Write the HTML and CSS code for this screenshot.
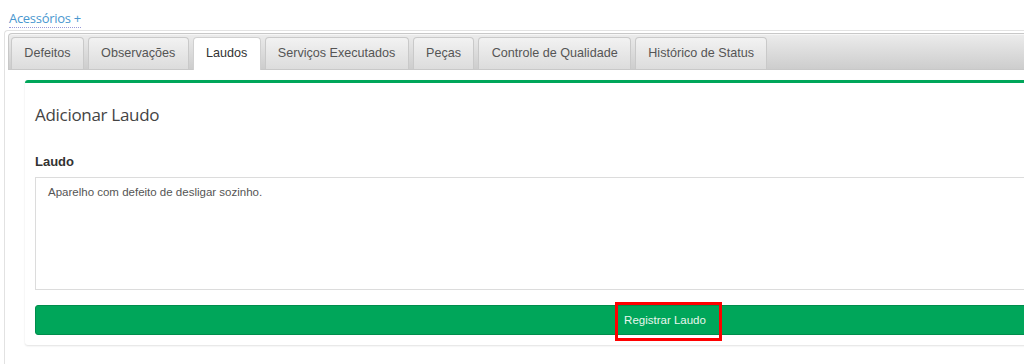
FILE: index.html
```html
<!DOCTYPE html>
<html lang="pt-BR">
<head>
<meta charset="utf-8">
<title>Laudos</title>
<link rel="stylesheet" href="styles.css">
</head>
<body>
<div class="page">
  <div class="top-link"><a href="#" class="acc">Acessórios +</a></div>
  <div class="outer">
    <ul class="tabs">
      <li class="tab">Defeitos</li>
      <li class="tab">Observações</li>
      <li class="tab active">Laudos</li>
      <li class="tab">Serviços Executados</li>
      <li class="tab">Peças</li>
      <li class="tab">Controle de Qualidade</li>
      <li class="tab">Histórico de Status</li>
    </ul>
    <div class="panel">
      <div class="box">
        <h3 class="box-title">Adicionar Laudo</h3>
        <label class="lbl">Laudo</label>
        <div class="textarea">Aparelho com defeito de desligar sozinho.</div>
        <div class="btn-wrap">
          <button class="btn">Registrar Laudo</button>
          <span class="highlight"></span>
        </div>
      </div>
    </div>
  </div>
</div>
</body>
</html>
```

FILE: styles.css
```css
html, body {
  margin: 0;
  padding: 0;
  background: #fff;
  overflow: hidden;
}
.page {
  width: 1400px;
  font-family: "Liberation Sans", Arial, sans-serif;
}
.top-link {
  padding: 9px 0 0 9px;
  height: 20px;
}
.acc {
  font-family: "Open Sans", sans-serif;
  font-size: 13px;
  line-height: 18px;
  color: #4a97cf;
  text-decoration: none;
  border-bottom: 1px dotted #9a9ad8;
  display: inline-block;
  letter-spacing: -0.3px;
}
.outer {
  margin: 1px 0 0 4px;
  border: 1px solid #e2e2e2;
  border-right: none;
  border-radius: 4px 0 0 0;
  padding: 2px 0 20px 3px;
}
.tabs {
  list-style: none;
  margin: 0;
  padding: 3px 0 0 2px;
  display: flex;
  gap: 4px;
  height: 32px;
  background: linear-gradient(#ececec, #cdcdcd);
  border: 1px solid #c8c8c8;
  border-right: none;
  border-radius: 4px 0 0 0;
  box-shadow: inset 0 1px 0 #f6f6f6;
}
.tab {
  box-sizing: border-box;
  height: 32px;
  padding: 0 12.3px;
  font-size: 12.6px;
  line-height: 31px;
  color: #555;
  background: linear-gradient(#f2f2f2, #dcdcdc);
  border: 1px solid #c9c9c9;
  border-bottom: none;
  border-radius: 4px 4px 0 0;
}
.tab.active {
  background: #fff;
  color: #333;
  height: 33px;
  border-color: #d0d0d0;
}
.panel {
  padding: 10px 0 0 17px;
}
.box {
  border-top: 3px solid #00a65a;
  border-radius: 3px;
  box-shadow: 0 1px 2px rgba(0, 0, 0, 0.12);
  padding: 0 10px 10px;
  width: 1260px;
}
.box-title {
  margin: 0;
  padding-top: 22px;
  font-family: "Open Sans", sans-serif;
  font-weight: 400;
  font-size: 17px;
  line-height: 20px;
  color: #444;
  letter-spacing: -0.3px;
}
.lbl {
  display: block;
  margin-top: 27px;
  font-weight: 700;
  font-size: 13px;
  line-height: 20px;
  color: #333;
}
.textarea {
  margin-top: 5px;
  box-sizing: border-box;
  height: 113px;
  border: 1px solid #dcdcdc;
  padding: 6px 12px;
  font-size: 11.5px;
  line-height: 16px;
  color: #555;
}
.btn-wrap {
  position: relative;
  margin-top: 15px;
}
.btn {
  display: block;
  width: 100%;
  height: 30px;
  border: 1px solid #008d4c;
  border-radius: 3px;
  background: #00a65a;
  color: #eaf6ee;
  font-family: "Liberation Sans", Arial, sans-serif;
  font-size: 11.5px;
  padding: 0;
}
.highlight {
  position: absolute;
  left: 580px;
  top: -3px;
  width: 101px;
  height: 33px;
  border: 3px solid #f00;
}
```
